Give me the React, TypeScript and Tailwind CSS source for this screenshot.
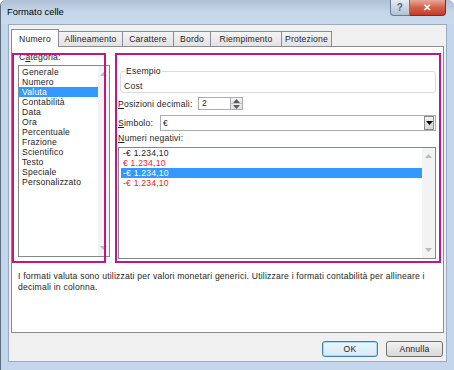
import React from "react";

const tabs: { label: string; w: string; active?: boolean }[] = [
  { label: "Numero", w: "w-[48px]", active: true },
  { label: "Allineamento", w: "w-[65px]" },
  { label: "Carattere", w: "w-[52px]" },
  { label: "Bordo", w: "w-[38px]" },
  { label: "Riempimento", w: "w-[72px]" },
  { label: "Protezione", w: "w-[51px]" },
];

const categorie = [
  "Generale",
  "Numero",
  "Valuta",
  "Contabilità",
  "Data",
  "Ora",
  "Percentuale",
  "Frazione",
  "Scientifico",
  "Testo",
  "Speciale",
  "Personalizzato",
];

const negativi: { text: string; red?: boolean; selected?: boolean }[] = [
  { text: "-€ 1.234,10" },
  { text: "€ 1.234,10", red: true },
  { text: "-€ 1.234,10", selected: true },
  { text: "-€ 1.234,10", red: true },
];

const Arrow: React.FC<{ down?: boolean; color?: string }> = ({ down, color = "#b9b9b9" }) => (
  <svg width="7" height="4" viewBox="0 0 7 4">
    <path d={down ? "M0 0 L7 0 L3.5 4 Z" : "M0 4 L7 4 L3.5 0 Z"} fill={color} />
  </svg>
);

const ScrollBar: React.FC<{ w: string }> = ({ w }) => (
  <div className={`${w} flex flex-col items-center justify-between bg-[#f3f3f3] py-[6px]`}>
    <Arrow />
    <Arrow down />
  </div>
);

export default function App() {
  return (
    <div className="w-[454px] h-[370px] overflow-hidden bg-[#c3d6ec] font-['Liberation_Sans',Arial,sans-serif] text-[8.6px] tracking-[0.2px] text-[#1e1e1e] border-l border-[#5f6f82] rounded-t-[6px]">
      {/* title bar */}
      <div className="h-[24px] flex items-start justify-between pl-[6px] pr-[8px] bg-gradient-to-b from-[#aebfd4] via-[#c6d6e9] to-[#c9daee]">
        <span className="mt-[7px] leading-[10px] text-[9.4px] tracking-normal text-black">Formato celle</span>
        <div className="flex">
          <div className="w-[20px] h-[16px] flex items-center justify-center rounded-bl-[4px] border border-t-0 border-[#6b7b8f] bg-gradient-to-b from-[#e4ebf3] to-[#b3c1d1] text-[10px] font-bold text-[#5a6472]">
            ?
          </div>
          <div className="w-[36px] h-[16px] flex items-center justify-center rounded-br-[4px] border border-t-0 border-l-0 border-[#6b3030] bg-gradient-to-b from-[#e8a899] via-[#d2604a] to-[#c43c22] text-[10px] font-bold text-white">
            ✕
          </div>
        </div>
      </div>

      {/* client area */}
      <div className="mx-[7px] h-[338px] border border-[#9aabbf] bg-[#f0f0f0] flex flex-col">
        <div className="flex items-end h-[17px] mt-[4px] ml-[2px]">
          {tabs.map((t) =>
            t.active ? (
              <div
                key={t.label}
                className={`${t.w} relative z-10 h-[18px] -mb-px flex items-center justify-center border border-b-0 border-[#898c95] bg-white leading-[10px]`}
              >
                {t.label}
              </div>
            ) : (
              <div
                key={t.label}
                className={`${t.w} h-[15px] -ml-px flex items-center justify-center border border-b-0 border-[#898c95] bg-gradient-to-b from-[#f4f4f4] to-[#e2e2e2] leading-[10px]`}
              >
                {t.label}
              </div>
            )
          )}
        </div>

        {/* panel */}
        <div className="relative ml-[2px] w-[433px] h-[287px] border border-[#898c95] bg-white">
          <div className="flex gap-[9px] pt-[6px]">
            {/* categoria */}
            <div className="relative w-[94px] h-[210px]">
              <div className="pl-[7px] leading-[8px]">
                C<span className="underline">a</span>tegoria:
              </div>
              <div className="ml-[6px] mt-[4px] w-[92px] h-[192px] flex border border-[#828790] bg-white">
                <div className="flex-1 pt-[1px]">
                  {categorie.map((c) => (
                    <div
                      key={c}
                      className={
                        c === "Valuta"
                          ? "h-[10px] leading-[10px] pl-[3px] bg-[#3399ff] text-white"
                          : "h-[10px] leading-[10px] pl-[3px]"
                      }
                    >
                      {c}
                    </div>
                  ))}
                </div>
                <ScrollBar w="w-[11px]" />
              </div>
              <div className="pointer-events-none absolute inset-0 z-10 border-2 border-[#c2177e]" />
            </div>

            {/* right side */}
            <div className="relative w-[326px] h-[210px] pl-[3px]">
              <fieldset className="mt-[13px] ml-[2px] w-[316px] border border-[#d9dde2] rounded-[3px] px-[3px] pt-[5px] pb-[1px]">
                <legend className="ml-[1px] px-[1px] leading-[10px]">Esempio</legend>
                <div className="leading-[10px]">Cost</div>
              </fieldset>

              <div className="mt-[4px] h-[13px] flex items-center">
                <span className="w-[80px] leading-[10px]">
                  <span className="underline">P</span>osizioni decimali:
                </span>
                <div className="w-[45px] h-[13px] flex border border-[#abadb3] bg-white">
                  <span className="flex-1 pl-[3px] leading-[11px]">2</span>
                  <div className="w-[12px] flex flex-col border-l border-[#abadb3]">
                    <div className="flex-1 flex items-center justify-center border-b border-[#c6c6c6] bg-gradient-to-b from-[#f6f6f6] to-[#e1e1e1]">
                      <Arrow color="#5a5a5a" />
                    </div>
                    <div className="flex-1 flex items-center justify-center bg-gradient-to-b from-[#f0f0f0] to-[#dedede]">
                      <Arrow down color="#5a5a5a" />
                    </div>
                  </div>
                </div>
              </div>

              <div className="mt-[5px] h-[16px] flex items-center">
                <span className="w-[42px] leading-[10px]">
                  <span className="underline">S</span>imbolo:
                </span>
                <div className="w-[276px] h-[16px] flex items-center border border-[#abadb3] bg-white">
                  <span className="flex-1 pl-[2px] leading-[10px]">€</span>
                  <div className="w-[10px] h-[14px] mr-px flex items-center justify-center border border-[#8a8a8a] bg-gradient-to-b from-[#f2f2f2] to-[#d6d6d6]">
                    <Arrow down color="#000" />
                  </div>
                </div>
              </div>

              <div className="mt-[2px] leading-[10px]">
                <span className="underline">N</span>umeri negativi:
              </div>
              <div className="mt-[4px] w-[318px] h-[112px] flex border border-[#828790] bg-white">
                <div className="flex-1 pl-[2px]">
                  {negativi.map((n, i) => (
                    <div
                      key={i}
                      className={
                        n.selected
                          ? "h-[10px] leading-[10px] pl-[2px] bg-[#3399ff] text-white"
                          : n.red
                          ? "h-[10px] leading-[10px] pl-[2px] text-[#ee1c25]"
                          : "h-[10px] leading-[10px] pl-[2px]"
                      }
                    >
                      {n.text}
                    </div>
                  ))}
                </div>
                <ScrollBar w="w-[13px]" />
              </div>
              <div className="pointer-events-none absolute inset-0 z-10 border-2 border-[#c2177e]" />
            </div>
          </div>

          <p className="mt-[8px] pl-[6px] pr-[8px] leading-[11px]">
            I formati valuta sono utilizzati per valori monetari generici. Utilizzare i formati contabilità per allineare i
            decimali in colonna.
          </p>
        </div>

        {/* buttons */}
        <div className="mt-[8px] flex justify-end gap-[8px] pr-[3px]">
          <button className="w-[56px] h-[16px] rounded-[3px] border border-[#3c7fb1] bg-gradient-to-b from-[#eaf6fd] to-[#d9e9f5] shadow-[inset_0_0_0_1px_#a9d9f5] leading-[10px]">
            OK
          </button>
          <button className="w-[57px] h-[16px] rounded-[3px] border border-[#707070] bg-gradient-to-b from-[#f2f2f2] to-[#d8d8d8] leading-[10px]">
            Annulla
          </button>
        </div>
      </div>
    </div>
  );
}
